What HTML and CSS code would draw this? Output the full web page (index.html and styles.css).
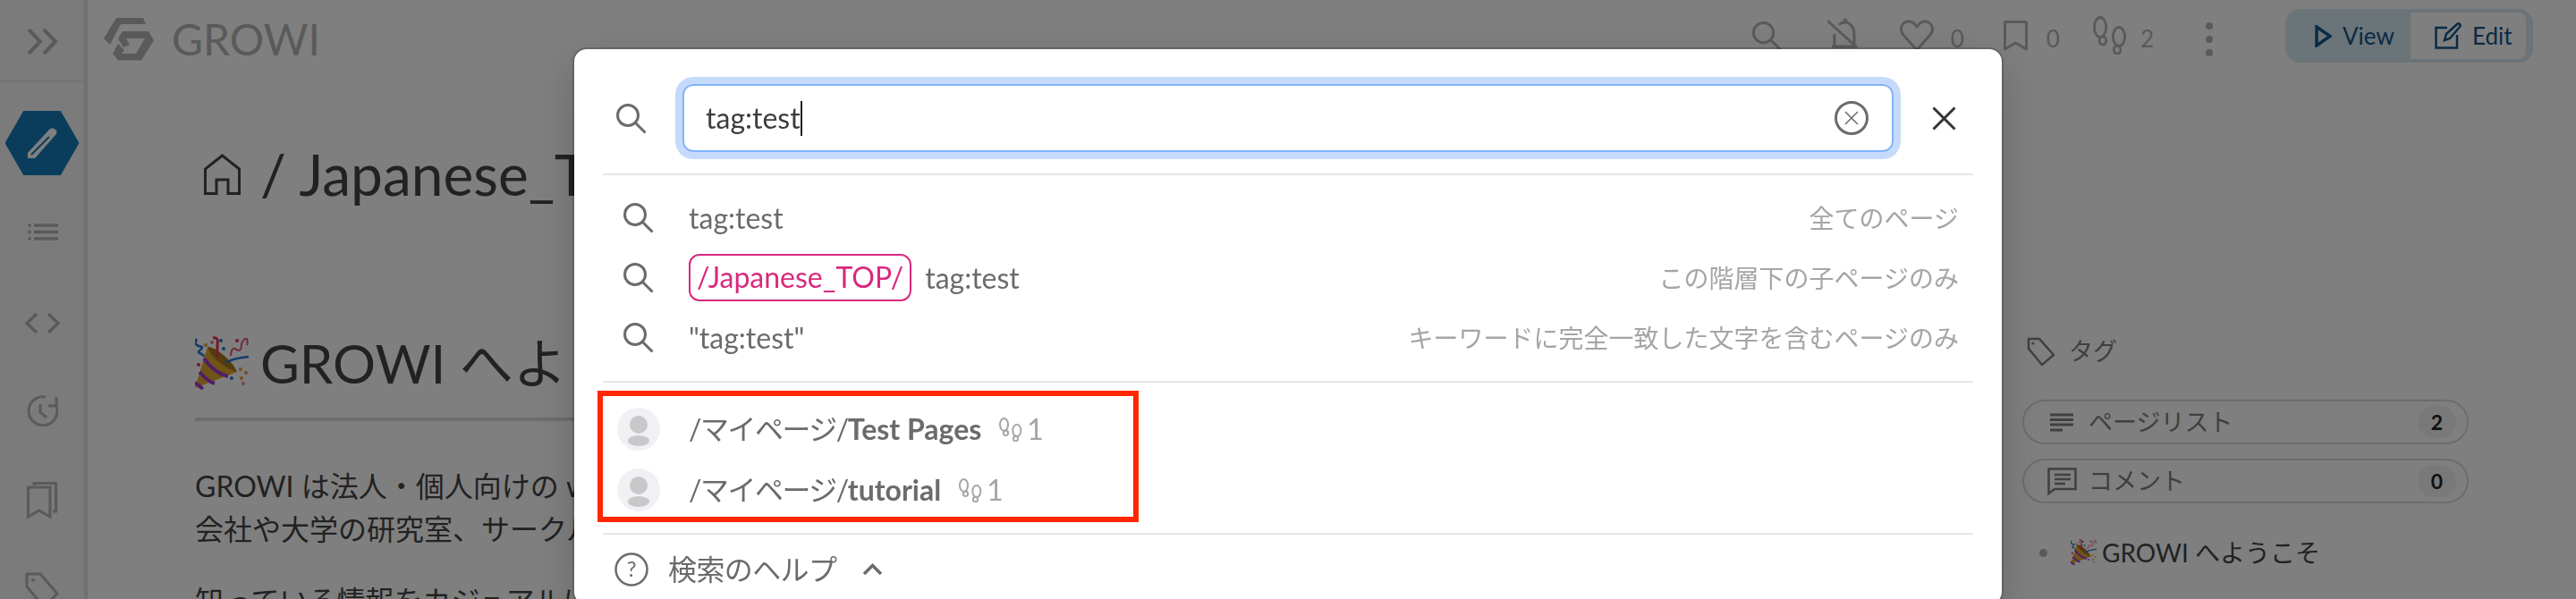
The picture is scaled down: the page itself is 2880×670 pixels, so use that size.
FILE: index.html
```html
<!DOCTYPE html>
<html lang="ja">
<head>
    <meta charset="UTF-8">
    <meta name="viewport" content="width=device-width, initial-scale=1.0">
    <title>GROWI</title>
    <link rel="stylesheet" href="styles.css">
</head>
<body>
    <svg class="defs" width="0" height="0">
        <symbol id="ic-search" viewBox="0 0 35 35">
            <circle cx="14" cy="14" r="11.5" fill="none" stroke="currentColor" stroke-width="3"/>
            <path d="M22 22 L33.5 33.5" fill="none" stroke="currentColor" stroke-width="3"/>
        </symbol>
        <symbol id="ic-feet" viewBox="0 0 40 43" preserveAspectRatio="none">
            <g fill="none" stroke="currentColor" stroke-width="3">
                <ellipse cx="8.5" cy="12.5" rx="7" ry="11"/>
                <ellipse cx="11.5" cy="27.5" rx="4" ry="4.5"/>
                <ellipse cx="30.5" cy="23" rx="7" ry="10.5"/>
                <ellipse cx="28.5" cy="37.5" rx="4" ry="4.5"/>
            </g>
        </symbol>
        <symbol id="ic-popper" viewBox="0 0 60 61">
            <path d="M0 58 L14 12 L47 40 Z" fill="#e0a92c"/>
            <path d="M14 12 C24 12 42 28 47 40 C38 38 18 26 14 12 Z" fill="#a8781c"/>
            <path d="M10 25 C18 36 28 43 37 45 M5 40 C10 46 16 51 22 53 M0 52 L9 59" stroke="#a23bd0" stroke-width="4" fill="none"/>
            <path d="M34 30 C40 26 50 24 60 23" stroke="#2a73d8" stroke-width="2.5" fill="none"/>
            <path d="M20 2 C25 1 26 4 25 10 L25 23" stroke="#e6344e" stroke-width="3" fill="none"/>
            <path d="M2 3 C-1 8 1 11 8 12 C8 16 3 16 4 18 C6 20 9 20 10 23" stroke="#2a73d8" stroke-width="2.5" fill="none"/>
            <path d="M40 22 C40 16 42 13 45 14 C49 18 52 16 52 9 C53 5 56 2 58 3 C59 6 59 8 58 10" stroke="#e6547a" stroke-width="2" fill="none"/>
            <circle cx="29" cy="5" r="2" fill="#2a73d8"/><circle cx="32" cy="14" r="2" fill="#2a73d8"/>
            <circle cx="19" cy="7" r="2" fill="#ef7fa4"/><circle cx="12" cy="10" r="2" fill="#e0a92c"/>
            <circle cx="47" cy="5" r="2" fill="#e6344e"/><circle cx="4" cy="32" r="2" fill="#e6344e"/>
            <circle cx="51" cy="37" r="2" fill="#e0a92c"/><circle cx="57" cy="41" r="2" fill="#e8963a"/>
            <circle cx="52" cy="47" r="2" fill="#e8963a"/><circle cx="41" cy="47" r="2" fill="#2a73d8"/>
            <circle cx="54" cy="53" r="2" fill="#ef7fa4"/>
        </symbol>
    </svg>

    <div class="app">
        <aside class="sidebar">
            <div class="sidebar-top">
                <svg class="ic-toggle" viewBox="0 0 35 31"><path d="M2 2 L15 15.5 L2 29 M19 2 L32 15.5 L19 29" fill="none" stroke="currentColor" stroke-width="4"/></svg>
            </div>
            <div class="hex">
                <svg viewBox="0 0 35 36" class="ic-pencil"><path d="M1 29 L25 3 C27 1 30 1 32 3 C34 5 34 7 32 9 L9 35 H1 Z" fill="#fff"/><path d="M5 31 L25 11" stroke="#147ab8" stroke-width="2"/></svg>
            </div>
            <svg class="nav-ic ic-list" viewBox="0 0 35 19"><path d="M8 2 H35 M8 9.5 H35 M8 17 H35" stroke="currentColor" stroke-width="3.5"/><circle cx="3" cy="2" r="2" fill="currentColor"/><circle cx="3" cy="9.5" r="2" fill="currentColor"/><circle cx="3" cy="17" r="2" fill="currentColor"/></svg>
            <svg class="nav-ic ic-code" viewBox="0 0 39 23"><path d="M13 1 L2 11.5 L13 22 M26 1 L37 11.5 L26 22" fill="none" stroke="currentColor" stroke-width="3.5"/></svg>
            <svg class="nav-ic ic-history" viewBox="0 0 35 35"><path d="M33 12 A16 16 0 1 1 21 2 M33 2 V12 H24 M15 10 V19 L22 25" fill="none" stroke="currentColor" stroke-width="3"/></svg>
            <svg class="nav-ic ic-marks" viewBox="0 0 34 41"><path d="M8 4 V1.5 H32.5 V33 H29 M1.5 39 V6 H26 V39 L13.5 32 Z" fill="none" stroke="currentColor" stroke-width="3"/></svg>
            <svg class="nav-ic ic-tag" viewBox="0 0 38 40"><path d="M2 2 H17 L36 24 L21 39 L2 16 Z" fill="none" stroke="currentColor" stroke-width="3" stroke-linejoin="round"/><circle cx="9" cy="9" r="2" fill="currentColor"/></svg>
        </aside>

        <div class="main">
            <header class="navbar">
                <div class="brand">
                    <svg class="logo" viewBox="0 0 56 48"><path d="M14 0 H44 L47 7 H19 L7 30 L0 23 Z M21 15 H50 L56 25 L42 47.5 H16 L10 40 L16 29 L23 36 L20 40 H36 L46 23 H25 L29 30 L22 33 L16 23 Z" fill="currentColor"/></svg>
                    <span class="brand-name">GROWI</span>
                </div>
                <div class="nav-tools">
                    <svg class="tool-search"><use href="#ic-search"/></svg>
                    <svg class="tool-bell" viewBox="0 0 35 38"><path d="M0 3 L33 33 M8 18 V32 M5 32 H32 M30 32 V18 C30 10 25 5 20 5 C17 5 14 6 13 8" fill="none" stroke="currentColor" stroke-width="3"/><circle cx="20" cy="3" r="2.5" fill="currentColor"/></svg>
                    <span class="tool-item tool-heart">
                        <svg viewBox="0 0 38 36"><path d="M19 34 L4 17 C-2 9 4 2 10 2 C14 2 18 5 19 9 C20 5 24 2 28 2 C34 2 40 9 34 17 Z" fill="none" stroke="currentColor" stroke-width="3"/></svg>
                        <span>0</span>
                    </span>
                    <span class="tool-item tool-mark">
                        <svg viewBox="0 0 27 34"><path d="M1.5 1.5 H25.5 V32 L13.5 25 L1.5 32 Z" fill="none" stroke="currentColor" stroke-width="3" stroke-linejoin="round"/></svg>
                        <span>0</span>
                    </span>
                    <span class="tool-item tool-feet">
                        <svg><use href="#ic-feet"/></svg>
                        <span>2</span>
                    </span>
                    <span class="tool-dots"><i></i><i></i><i></i></span>
                    <div class="view-switch">
                        <span class="switch-btn is-active">
                            <svg class="ic-play" viewBox="0 0 19 25"><path d="M2 2 L17 12.5 L2 23 Z" fill="none" stroke="currentColor" stroke-width="3.5"/></svg>View
                        </span>
                        <span class="switch-btn">
                            <svg class="ic-edit" viewBox="0 0 30 30"><path d="M14 6 H1.5 V28.5 H25 V14 M11 20 L13 13 L25 2 C27 0 30 3 28 5 L17 18 Z" fill="none" stroke="currentColor" stroke-width="2.5"/></svg>Edit
                        </span>
                    </div>
                </div>
            </header>

            <div class="content">
                <div class="page-title">
                    <svg class="ic-home" viewBox="0 0 41 46"><path d="M1.5 44.5 V17 L20.5 2 L39.5 17 V44.5 H27 V29 H14 V44.5 Z" fill="none" stroke="currentColor" stroke-width="3"/></svg>
                    <span>/ Japanese_TOP</span>
                </div>
                <div class="page-body">
                    <article class="article">
                        <h1><svg class="popper"><use href="#ic-popper"/></svg>GROWI へようこそ</h1>
                        <p>GROWI は法人・個人向けの wiki</p>
                        <p>会社や大学の研究室、サークル</p>
                        <p>知っている情報をカジュアルに</p>
                    </article>
                    <aside class="side">
                        <div class="side-tags">
                            <svg viewBox="0 0 32 33"><path d="M2 2 H14 L30 20 L17 31 L2 13 Z" fill="none" stroke="currentColor" stroke-width="2.5" stroke-linejoin="round"/><circle cx="7" cy="7" r="1.5" fill="currentColor"/></svg>
                            <span>タグ</span>
                        </div>
                        <div class="side-pill">
                            <svg class="ic-lines" viewBox="0 0 26 21"><path d="M0 2 H26 M0 7.5 H26 M0 13 H26 M0 19 H14" stroke="currentColor" stroke-width="3"/></svg>
                            <span>ページリスト</span>
                            <b>2</b>
                        </div>
                        <div class="side-pill">
                            <svg class="ic-comment" viewBox="0 0 33 31"><path d="M1.5 29 V1.5 H31.5 V24 H8 Z M8 8 H26 M8 13 H26 M8 18 H20" fill="none" stroke="currentColor" stroke-width="2.5"/></svg>
                            <span>コメント</span>
                            <b>0</b>
                        </div>
                        <ul class="toc">
                            <li><svg class="popper-sm"><use href="#ic-popper"/></svg>GROWI へようこそ</li>
                        </ul>
                    </aside>
                </div>
            </div>
        </div>
    </div>

    <div class="backdrop"></div>

    <div class="modal">
        <div class="search-head">
            <svg class="ic-head"><use href="#ic-search"/></svg>
            <div class="search-input">
                <span>tag:test</span><i class="caret"></i>
                <svg class="ic-clear" viewBox="0 0 38 38"><circle cx="19" cy="19" r="17.5" fill="none" stroke="currentColor" stroke-width="3"/><path d="M12 12 L26 26 M26 12 L12 26" stroke="currentColor" stroke-width="1.5"/></svg>
            </div>
            <svg class="ic-close" viewBox="0 0 27 27"><path d="M1.5 1.5 L25.5 25.5 M25.5 1.5 L1.5 25.5" stroke="currentColor" stroke-width="3"/></svg>
        </div>

        <ul class="suggest">
            <li>
                <svg class="ic-row"><use href="#ic-search"/></svg>
                <span>tag:test</span>
                <em>全てのページ</em>
            </li>
            <li>
                <svg class="ic-row"><use href="#ic-search"/></svg>
                <span class="scope">/Japanese_TOP/</span>
                <span>tag:test</span>
                <em>この階層下の子ページのみ</em>
            </li>
            <li>
                <svg class="ic-row"><use href="#ic-search"/></svg>
                <span>"tag:test"</span>
                <em>キーワードに完全一致した文字を含むページのみ</em>
            </li>
        </ul>

        <ul class="results">
            <li>
                <svg class="avatar" viewBox="0 0 48 48"><circle cx="24" cy="24" r="24" fill="#f0f1f5"/><circle cx="24" cy="19" r="10" fill="#c8c8c8"/><ellipse cx="24" cy="37" rx="12" ry="6" fill="#c8c8c8"/></svg>
                <span><span class="path-jp">/マイページ/</span><b>Test Pages</b></span>
                <svg class="ic-foot"><use href="#ic-feet"/></svg>
                <span class="count">1</span>
            </li>
            <li>
                <svg class="avatar" viewBox="0 0 48 48"><circle cx="24" cy="24" r="24" fill="#f0f1f5"/><circle cx="24" cy="19" r="10" fill="#c8c8c8"/><ellipse cx="24" cy="37" rx="12" ry="6" fill="#c8c8c8"/></svg>
                <span><span class="path-jp">/マイページ/</span><b>tutorial</b></span>
                <svg class="ic-foot"><use href="#ic-feet"/></svg>
                <span class="count">1</span>
            </li>
            <li class="highlight"></li>
        </ul>

        <div class="help">
            <svg class="ic-help" viewBox="0 0 38 38"><circle cx="19" cy="19" r="17.5" fill="none" stroke="currentColor" stroke-width="2.5"/><text x="19" y="27" text-anchor="middle" class="help-mark">?</text></svg>
            <span class="help-label">検索のヘルプ</span>
            <svg class="ic-chevron" viewBox="0 0 23 14"><path d="M2 12 L11.5 2.5 L21 12" fill="none" stroke="currentColor" stroke-width="3.5"/></svg>
        </div>
    </div>
</body>
</html>
```

FILE: styles.css
```css
html, body {
    margin: 0;
    height: 670px;
    overflow: hidden;
}
body {
    font-family: Lato, "Noto Sans CJK JP", sans-serif;
    font-size: 32px;
    line-height: 48px;
    color: #444;
    background-color: #fff;
}
ul {
    list-style: none;
    margin: 0;
    padding: 0;
}
svg {
    display: block;
    flex: none;
}
.defs {
    position: absolute;
}

/* page behind the dialog */
.app {
    display: flex;
    width: 2880px;
    height: 670px;
}
.sidebar {
    width: 94px;
    flex: none;
    border-right: 4px solid #e0e0e0;
    background-color: #f6f6f6;
    color: #b4b4b4;
    display: flex;
    flex-direction: column;
    align-items: center;
}
.sidebar-top {
    flex: none;
    box-sizing: border-box;
    width: 100%;
    height: 92px;
    border-bottom: 2px solid #e8e8e8;
    display: flex;
    align-items: center;
    justify-content: center;
}
.ic-toggle {
    width: 35px;
    height: 31px;
    margin-top: 2px;
}
.hex {
    flex: none;
    width: 83px;
    height: 72px;
    margin-top: 32px;
    background-color: #147ab8;
    clip-path: polygon(25% 0, 75% 0, 100% 50%, 75% 100%, 25% 100%, 0 50%);
    display: flex;
    align-items: center;
    justify-content: center;
}
.ic-pencil {
    width: 35px;
    height: 36px;
}
.nav-ic {
    color: #b4b4b4;
}
.ic-list {
    width: 35px;
    height: 19px;
    margin-top: 54px;
}
.ic-code {
    width: 39px;
    height: 23px;
    margin-top: 81px;
}
.ic-history {
    width: 35px;
    height: 35px;
    margin-top: 69px;
}
.ic-marks {
    width: 34px;
    height: 41px;
    margin-top: 62px;
}
.ic-tag {
    width: 38px;
    height: 40px;
    margin-top: 60px;
}

.main {
    flex: 1;
    min-width: 0;
}
.navbar {
    height: 92px;
    display: flex;
    align-items: flex-start;
    justify-content: space-between;
    padding-right: 48px;
}
.brand {
    display: flex;
    align-items: center;
    margin: 20px 0 0 18px;
    color: #b4b4b4;
}
.logo {
    width: 56px;
    height: 48px;
}
.brand-name {
    margin-left: 20px;
    font-size: 48px;
    line-height: 48px;
}
.nav-tools {
    display: flex;
    align-items: flex-start;
    color: #b4b4b4;
    font-size: 26px;
    line-height: 30px;
}
.tool-search {
    width: 34px;
    height: 34px;
    margin-top: 23px;
}
.tool-bell {
    width: 35px;
    height: 38px;
    margin: 20px 0 0 51px;
}
.tool-item {
    display: flex;
    align-items: center;
}
.tool-item span {
    margin-top: 6px;
}
.tool-heart {
    margin: 22px 0 0 46px;
}
.tool-heart svg {
    width: 38px;
    height: 36px;
    margin-right: 19px;
}
.tool-mark {
    margin: 22px 0 0 44px;
}
.tool-mark svg {
    width: 27px;
    height: 34px;
    margin-right: 21px;
}
.tool-feet {
    margin: 18px 0 0 37px;
}
.tool-feet svg {
    width: 38px;
    height: 43px;
    margin-right: 15px;
}
.tool-dots {
    display: flex;
    flex-direction: column;
    gap: 7px;
    margin: 25px 0 0 58px;
}
.tool-dots i {
    width: 8px;
    height: 8px;
    border-radius: 50%;
    background-color: currentColor;
}
.view-switch {
    display: flex;
    margin: 10px 0 0 81px;
    padding: 4px 8px;
    width: 261px;
    height: 52px;
    border-radius: 16px;
    background-color: #d7e9f3;
    color: #145688;
}
.switch-btn {
    display: flex;
    align-items: center;
    font-size: 26px;
    background-color: #fff;
    border-radius: 0 8px 8px 0;
    padding-left: 27px;
    flex: 1;
}
.switch-btn.is-active {
    background-color: #d7e9f3;
    flex: none;
    width: 132px;
    padding-left: 25px;
    box-sizing: border-box;
}
.ic-play {
    width: 19px;
    height: 25px;
    margin-right: 12px;
}
.ic-edit {
    width: 30px;
    height: 30px;
    margin-right: 12px;
}

.content {
    padding-left: 120px;
}
.page-title {
    display: flex;
    align-items: center;
    height: 78px;
    margin: 64px 0 0 10px;
    font-size: 64px;
}
.ic-home {
    width: 41px;
    height: 46px;
    margin-right: 22px;
}
.page-body {
    display: flex;
    margin-top: 136px;
}
.article {
    width: 2000px;
    flex: none;
}
.article h1 {
    margin: 0 0 49px;
    padding-bottom: 25px;
    border-bottom: 4px solid #d8d8d8;
    display: flex;
    align-items: center;
    font-size: 60px;
    line-height: 72px;
    font-weight: 400;
}
.popper {
    width: 60px;
    height: 61px;
    margin-right: 13px;
}
.article p {
    margin: 0;
    white-space: nowrap;
}
.article p:nth-of-type(2) {
    margin-bottom: 32px;
}

.side {
    width: 499px;
    margin-left: 43px;
    font-size: 27px;
    flex: none;
}
.side-tags {
    display: flex;
    align-items: center;
    height: 46px;
    margin: 0 0 31px 5px;
    color: #808080;
}
.side-tags svg {
    width: 32px;
    height: 33px;
    margin-right: 15px;
}
.side-pill {
    display: flex;
    align-items: center;
    box-sizing: border-box;
    height: 50px;
    margin-bottom: 16px;
    padding: 0 12px 0 26px;
    border: 2px solid #d8d8d8;
    border-radius: 25px;
    color: #808080;
}
.side-pill span {
    flex: 1;
    line-height: 46px;
}
.side-pill b {
    width: 43px;
    height: 36px;
    border-radius: 18px;
    background-color: #f2f2f2;
    color: #222;
    font-size: 23px;
    line-height: 36px;
    text-align: center;
}
.ic-lines {
    width: 26px;
    height: 21px;
    margin: 0 17px 0 3px;
}
.ic-comment {
    width: 33px;
    height: 31px;
    margin-right: 13px;
}
.toc {
    margin-top: 31px;
    padding-left: 19px;
    font-size: 28px;
}
.toc li {
    display: flex;
    align-items: center;
    position: relative;
    padding-left: 35px;
}
.toc li::before {
    content: "";
    position: absolute;
    left: 0;
    top: 20px;
    width: 9px;
    height: 9px;
    border-radius: 50%;
    background-color: #b4b4b4;
}
.popper-sm {
    width: 29px;
    height: 30px;
    margin-right: 6px;
}

/* dialog */
.backdrop {
    position: fixed;
    inset: 0;
    background-color: rgba(0, 0, 0, 0.5);
}
.modal {
    position: fixed;
    top: 53px;
    left: 50%;
    margin-left: -800px;
    width: 1600px;
    box-sizing: border-box;
    padding: 0 32px;
    border: 2px solid rgba(0, 0, 0, 0.2);
    background-clip: padding-box;
    border-radius: 16px;
    background-color: #fff;
    box-shadow: 0 16px 48px rgba(0, 0, 0, 0.175);
    color: #6b6b6b;
    font-size: 32px;
}
.search-head {
    display: flex;
    align-items: center;
    padding: 39px 0 24px;
    border-bottom: 2px solid #e6e6e6;
}
.ic-head {
    width: 35px;
    height: 35px;
    margin-left: 14px;
}
.search-input {
    flex: 1;
    display: flex;
    align-items: center;
    height: 76px;
    box-sizing: border-box;
    margin-left: 40px;
    padding: 0 26px 0 24px;
    border: 2px solid #80b4fb;
    border-radius: 12px;
    box-shadow: 0 0 0 8px #c5dafc;
    color: #3d3d3d;
}
.caret {
    width: 2px;
    height: 39px;
    background-color: #222;
}
.ic-clear {
    width: 38px;
    height: 38px;
    margin-left: auto;
    color: #6b6b6b;
}
.ic-close {
    width: 27px;
    height: 27px;
    margin: 0 19px 0 43px;
    color: #333;
}
.suggest {
    padding: 14px 0 15px;
    border-bottom: 2px solid #e6e6e6;
}
.suggest li {
    display: flex;
    align-items: center;
    height: 67px;
    padding: 0 16px 0 22px;
}
.ic-row {
    width: 35px;
    height: 35px;
    margin-right: 39px;
}
.scope {
    box-sizing: border-box;
    height: 53px;
    margin-right: 15px;
    padding: 0 7px;
    border: 2px solid #d9297d;
    border-radius: 12px;
    color: #d9297d;
    line-height: 47px;
}
.suggest em {
    margin-left: auto;
    font-style: normal;
    font-size: 28px;
    color: #a5a5a5;
}
.results {
    position: relative;
    padding: 18px 0 14px;
    border-bottom: 2px solid #e6e6e6;
}
.results li {
    display: flex;
    align-items: center;
    height: 68px;
    padding-left: 16px;
}
.avatar {
    width: 48px;
    height: 48px;
    margin-right: 32px;
}
.path-jp {
    letter-spacing: -1.5px;
}
.results b {
    font-weight: 700;
}
.ic-foot {
    width: 26px;
    height: 27px;
    margin-left: 20px;
    color: #a5a5a5;
}
.count {
    margin-left: 5px;
    color: #a5a5a5;
}
.results .highlight {
    position: absolute;
    left: -6px;
    top: 9px;
    width: 605px;
    height: 147px;
    box-sizing: border-box;
    padding: 0;
    border: 6px solid #ff2600;
}
.help {
    display: flex;
    align-items: center;
    height: 78px;
    padding-left: 13px;
}
.help-label {
    letter-spacing: -0.6px;
}
.ic-help {
    width: 38px;
    height: 38px;
    margin-right: 22px;
}
.help-mark {
    font-size: 24px;
    fill: currentColor;
}
.ic-chevron {
    width: 23px;
    height: 14px;
    margin-left: 29px;
}
```
